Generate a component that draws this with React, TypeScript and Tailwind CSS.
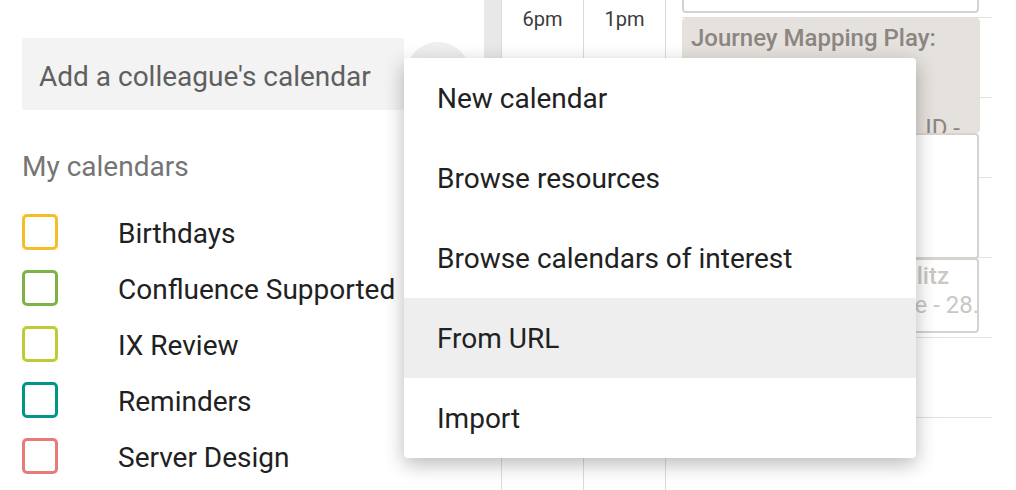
const calendars = [
  { name: 'Birthdays', color: 'border-[#f6bf26]' },
  { name: 'Confluence Supported', color: 'border-[#7cb342]' },
  { name: 'IX Review', color: 'border-[#c0ca33]' },
  { name: 'Reminders', color: 'border-[#009688]' },
  { name: 'Server Design', color: 'border-[#e67c73]' },
];

const menuItems = [
  { label: 'New calendar' },
  { label: 'Browse resources' },
  { label: 'Browse calendars of interest' },
  { label: 'From URL', active: true },
  { label: 'Import' },
];

function Sidebar() {
  return (
    <div className="w-[484px] shrink-0 pl-[22px] pt-[38px]">
      <div className="flex items-center">
        <div className="flex h-[72px] w-[382px] items-center rounded-[3px] bg-[#f3f3f3] px-[17px] pt-[5px] text-[28px] text-[#5f5f5f]">
          Add a colleague's calendar
        </div>
        <div className="ml-[2px] h-[64px] w-[64px] rounded-full bg-[#efefef]" />
      </div>
      <div className="mt-[39px] text-[28px] leading-[36px] text-[#757575]">My calendars</div>
      <div className="mt-[19px]">
        {calendars.map((c) => (
          <div key={c.name} className="flex h-[56px] items-center">
            <div className={`h-[36px] w-[36px] rounded-[5px] border-[3px] ${c.color}`} />
            <span className="ml-[60px] whitespace-nowrap pt-[3px] text-[28px] text-[#212121]">{c.name}</span>
          </div>
        ))}
      </div>
    </div>
  );
}

function TimeColumn({ label }: { label: string }) {
  return (
    <div className="w-[82px] shrink-0 border-l border-[#dcdcdc] pt-[7px] text-center text-[20px] leading-[24px] text-[#3c3c3c]">
      {label}
    </div>
  );
}

function DayColumn() {
  return (
    <div className="flex-1 border-l border-[#dcdcdc] pl-[16px]">
      <div className="relative h-[490px] w-[310px]">
        <div className="flex flex-col">
          <div className="h-[18px] border-b border-[#e3e0dd]" />
          {[0, 1, 2, 3, 4].map((i) => (
            <div key={i} className="h-[80px] border-b border-[#e3e0dd]" />
          ))}
        </div>

        <div className="absolute left-0 top-[-20px] h-[33px] w-[297px] rounded-[4px] border-2 border-[#d6d2ce] bg-white" />

        <div className="absolute left-0 top-[18px] h-[115px] w-[298px] overflow-hidden rounded-[4px] bg-[#e5e1dd] pl-[9px] pt-[5px] text-[24px] leading-[30px] text-[#8b8682]">
          <div className="font-medium">Journey Mapping Play:</div>
          <div>Jun 2:00</div>
          <div>&nbsp;</div>
          <div className="flex justify-end whitespace-nowrap pr-[20px]">ID -</div>
        </div>

        <div className="absolute left-0 top-[133px] h-[126px] w-[297px] rounded-[4px] border-2 border-[#d6d2ce] bg-white" />

        <div className="absolute left-0 top-[258px] h-[75px] w-[297px] overflow-hidden rounded-[4px] border-2 border-[#d6d2ce] bg-white pt-[2px] text-[24px] leading-[29px] text-[#cbc7c3]">
          <div className="flex justify-end whitespace-nowrap pr-[28px] font-medium">Design Sprint Blitz</div>
          <div className="flex justify-end whitespace-nowrap">
            <span className="mr-[-29px]">Conference - 28.06</span>
          </div>
        </div>
      </div>
    </div>
  );
}

function AddMenu() {
  return (
    <div className="absolute left-[404px] top-[58px] w-[512px] overflow-hidden rounded-[4px] bg-white shadow-[0_6px_20px_rgba(0,0,0,0.28)]">
      {menuItems.map((item) => (
        <div
          key={item.label}
          className={`flex h-[80px] items-center px-[33px] pt-[2px] text-[28px] text-[#212121] ${item.active ? 'bg-[#eeeeee]' : ''}`}
        >
          {item.label}
        </div>
      ))}
    </div>
  );
}

export default function App() {
  return (
    <div className="relative flex h-[490px] w-[1016px] overflow-hidden bg-white font-['Roboto',sans-serif]">
      <Sidebar />
      <div className="h-[300px] w-[17px] shrink-0 bg-[#e8e8e8]" />
      <div className="flex flex-1">
        <TimeColumn label="6pm" />
        <TimeColumn label="1pm" />
        <DayColumn />
      </div>
      <AddMenu />
    </div>
  );
}
